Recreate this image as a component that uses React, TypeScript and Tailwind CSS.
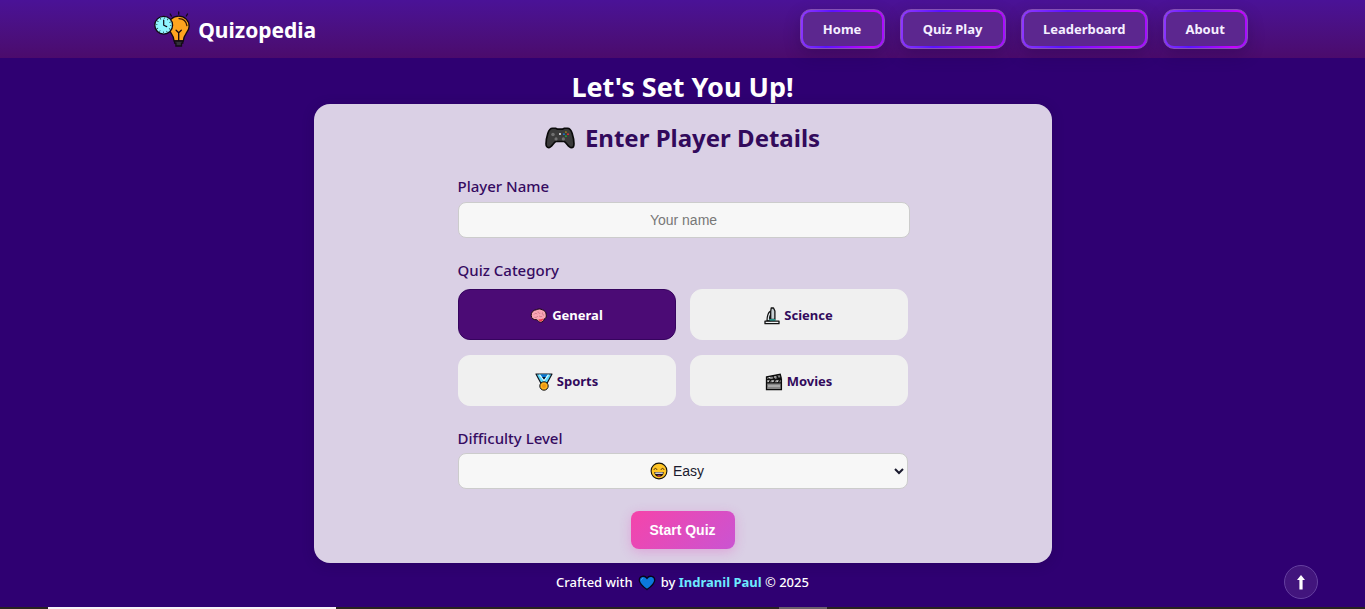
import { useState, type ReactNode } from "react";

type IconProps = { className?: string };

function LogoIcon() {
  return (
    <svg className="h-9 w-9 shrink-0" viewBox="0 0 36 36" fill="none" stroke="#120a14" strokeWidth="1.3" strokeLinecap="round" aria-hidden="true">
      <path d="M24.700 1v2.200M16.200 3l1.200 2M33.500 3l-1.200 2" />
      <path d="M24.700 5.200c-6.200 0-10.400 4.400-10.400 10.200 0 5.700 5.600 7.600 5.800 14.600h9.200c.2-7 5.800-8.900 5.800-14.600 0-5.800-4.200-10.200-10.400-10.200Z" fill="#ffa51f" />
      <path d="M25 7.600c4.200.2 7.300 3 7.900 7" stroke="#3a1b05" />
      <path d="M24.700 29.500v-7.800l-2.600-2.400M24.700 21.700l2.600-2.400" />
      <path d="M20.600 30h8.200v2.200h-1.300V35h-5.600v-2.800h-1.300Z" fill="#33313a" />
      <circle cx="9.700" cy="14.200" r="8.900" fill="#8ff5ff" />
      <circle cx="9.700" cy="14.200" r="7" strokeWidth="1.500" strokeDasharray=".6 3.065" strokeLinecap="butt" />
      <path d="M9.700 9v5.200l3 1.400" strokeWidth="1.200" />
    </svg>
  );
}

function GamepadIcon() {
  return (
    <svg className="h-6 w-[30px] shrink-0" viewBox="0 0 32 24" aria-hidden="true">
      <path d="M8 1.600h3.500l1.800 1h5.400l1.800-1H24c2.500 0 4 2.300 5 5.500 1 3.200 1.900 7.500 1.900 10.900 0 2.800-1.100 4.300-2.900 4.300-2.800 0-5.200-5.500-7.500-6.600h-9C9.200 16.800 6.800 22.300 4 22.300c-1.800 0-2.900-1.500-2.900-4.300 0-3.400.9-7.700 1.900-10.900 1-3.200 2.500-5.500 5-5.500Z" fill="#3b3b3b" stroke="#0a0a0a" strokeWidth="1.800" />
      <circle cx="8.500" cy="8.200" r="1.900" fill="#707070" />
      <circle cx="11.800" cy="13" r="1.700" fill="#707070" />
      <circle cx="19.600" cy="13" r="1.700" fill="#707070" />
      <circle cx="16" cy="7.700" r="1.100" fill="#eee" />
      <circle cx="22.300" cy="5.700" r="1" fill="#a38b15" />
      <circle cx="20.200" cy="7.900" r="1" fill="#1474d4" />
      <circle cx="24.500" cy="7.900" r="1" fill="#e33232" />
      <circle cx="22.300" cy="10" r="1" fill="#20a63c" />
    </svg>
  );
}

function BrainIcon() {
  return (
    <svg className="h-[18px] w-[18px] shrink-0" viewBox="0 0 18 18" fill="none" aria-hidden="true">
      <path d="M1.200 8.500C1 5.400 3.300 3 6.500 2.700c1.700-1 4.200-1 5.800.1 2.300.5 3.900 2.400 3.800 4.700.7 2-.2 4-2.100 4.700-.2 1.700-1.500 2.900-3.300 3-1.600 0-2.600-1.400-3.900-2.500-3 .3-5.400-1-5.600-4.200Z" fill="#f9a5b4" stroke="#19080f" />
      <path d="M8.500 12.200c2 .5 3.600-.2 5-1-.2 2-1.300 3.200-2.900 3.300-1 0-1.700-1-2.100-2.300Z" fill="#ed3e4b" />
      <path d="M4 7.500c1-1.500 2.300-1.300 3.200-.4M8 4.500c0 1.500 1.200 2.100 2.300 1.700M12.500 5.500c-.5 1.500.3 2.500 1.500 2.600M4.500 10.300c1.500.5 2.700-.4 3.500-1.200M9 8.800c1 .9 2 1 3.200.5" stroke="#c97386" strokeWidth=".9" />
    </svg>
  );
}

function MicroscopeIcon() {
  return (
    <svg className="h-[18px] w-[16px] shrink-0" viewBox="0 0 16 18" fill="none" stroke="#111" strokeWidth="1.300" strokeLinejoin="round" aria-hidden="true">
      <path d="M6.500 4C3.500 6 3 9.500 3 14h3.500c-1.200-2.500-.8-5 .2-6.500" fill="#dfe5e8" />
      <path d="M7.200 1h2.300l1.400 3v8.500H6.700V4.500Z" fill="#c8d0d4" />
      <path d="M5.500 12.300h6V14h-6Z" fill="#2fc4b6" stroke="none" />
      <path d="M1 14.200h14v2.500H1Z" fill="#eef1f3" />
    </svg>
  );
}

function MedalIcon() {
  return (
    <svg className="h-[18px] w-[18px] shrink-0" viewBox="0 0 18 18" stroke="#10131c" strokeLinejoin="round" aria-hidden="true">
      <path d="M1 1h16l-4.800 9H5.800Z" fill="#5cd7f8" strokeWidth="1.200" />
      <path d="M5.300 1.600h7.400L9 7.500Z" fill="#0873d1" stroke="none" />
      <path d="m4.500 1.600 4.500 6 4.500-6" stroke="#d9faff" fill="none" strokeWidth="1.100" />
      <path d="m7.200 4 1.800 2.500L10.800 4Z" fill="#10131c" stroke="none" />
      <circle cx="9" cy="13" r="4.200" fill="#ffb319" />
      <circle cx="9" cy="13" r="2" fill="#ef9813" stroke="none" />
    </svg>
  );
}

function ClapperIcon() {
  return (
    <svg className="h-[18px] w-[18px] shrink-0" viewBox="0 0 18 18" aria-hidden="true">
      <path d="m1.500 4 13.700-2.700.9 3.200-4 1.500h4.300v10.700H1.500Z" fill="#858585" stroke="#0b0b0b" strokeWidth="1.300" />
      <path d="M2 6.500h14M3 6.500l2-2.800M7.500 6.500l2-1.400-2-2.300M11.500 5.500l1.500-1.200-1.800-2.200M4 9.700l2-3M8.500 9.700l2-3M13 9.700l2-3M2 9.900h14" stroke="#111" strokeWidth="1.200" fill="none" />
      <path d="m3.500 4.800 1.800-.4M9.200 4.200l1.300-.3M7.200 8.200h1.500M11.700 8.200h1.500M2.700 8.200h1.200" stroke="#f2f2f2" />
      <path d="M3 13h12" stroke="#d6d6d6" strokeWidth=".9" />
    </svg>
  );
}

function SmileIcon({ className = "" }: IconProps) {
  return (
    <svg className={className} viewBox="0 0 18 18" fill="none" aria-hidden="true">
      <circle cx="9" cy="9" r="7.900" fill="#ffc526" stroke="#15120a" strokeWidth="1.100" />
      <path d="M4 7.500c.6-1.600 2.300-1.600 2.900 0M11.100 7.500c.6-1.600 2.300-1.600 2.900 0" stroke="#513007" strokeWidth="1" strokeLinecap="round" />
      <path d="M4.300 10h9.400c0 3-2 4.800-4.700 4.800S4.300 13 4.300 10Z" fill="#18121c" />
      <path d="M5.200 10.500h7.600v1.300H5.200Z" fill="#fff" />
      <path d="M7 14c1-.9 3-.9 4 0-1.200.7-2.800.7-4 0Z" fill="#ef4552" />
    </svg>
  );
}

function HeartIcon() {
  return (
    <svg className="h-4 w-[18px] shrink-0" viewBox="0 0 18 16" aria-hidden="true">
      <path d="M9 14.600C5.500 12 1.300 8.700 1.300 5.200c0-4.300 5.500-5.300 7.700-1.800 2.200-3.500 7.700-2.500 7.700 1.800 0 3.500-4.200 6.800-7.700 9.400Z" fill="#0b78dc" stroke="#07051c" strokeWidth="1.300" />
      <path d="M3.300 5.200c.1-1 .8-1.700 1.800-1.800" stroke="#51a9f3" fill="none" />
    </svg>
  );
}

const links = [
  { label: "Home", width: "w-[85px]" },
  { label: "Quiz Play", width: "w-[106px]" },
  { label: "Leaderboard", width: "w-[127px]" },
  { label: "About", width: "w-[85px]" },
];

const categories: { label: string; icon: ReactNode }[] = [
  { label: "General", icon: <BrainIcon /> },
  { label: "Science", icon: <MicroscopeIcon /> },
  { label: "Sports", icon: <MedalIcon /> },
  { label: "Movies", icon: <ClapperIcon /> },
];

function NavLink({ label, width }: { label: string; width: string }) {
  return (
    <a
      href="#"
      className={`${width} h-10 rounded-[11px] border border-[#8450b5] bg-[linear-gradient(100deg,#9139ff_0%,#5b12ff_35%,#c800ff_85%,#9b12ff_100%)] p-[2px] shadow-[0_6px_16px_rgba(30,0,65,0.3)]`}
    >
      <span className="flex h-full items-center justify-center rounded-lg bg-[#5c278f] pt-[2px] text-[13px] font-bold whitespace-nowrap text-[#f5efff]">
        {label}
      </span>
    </a>
  );
}

export default function App() {
  const [category, setCategory] = useState("General");
  return (
    <div className="flex min-h-screen flex-col bg-[#2f0072] font-['Noto_Sans','Open_Sans',sans-serif] text-white">
      <header className="flex h-[58px] items-center justify-between bg-linear-to-b from-[#4a1297] to-[#4b0b6c] pr-[8.6%] pl-[11.300%]">
        <a href="#" className="flex items-center gap-2">
          <LogoIcon />
          <span className="pt-[3px] text-[21px] font-bold">Quizopedia</span>
        </a>
        <nav className="flex gap-[15px]" aria-label="Main">
          {links.map((link) => (
            <NavLink key={link.label} {...link} />
          ))}
        </nav>
      </header>

      <main className="flex flex-col items-center pt-3">
        <h1 className="h-[34px] text-[27px] leading-[34px] font-bold">Let's Set You Up!</h1>
        <form
          className="flex w-[738px] max-w-full flex-col items-center rounded-2xl bg-[#dad0e5] pb-[14px] text-[#350b61] shadow-[0_2px_12px_rgba(30,0,65,0.3)]"
          onSubmit={(event) => event.preventDefault()}
        >
          <h2 className="flex h-[68px] items-center gap-[10px] text-[24px] font-bold text-[#320a5c]">
            <GamepadIcon />
            Enter Player Details
          </h2>

          <div className="flex w-[450px] max-w-full flex-col">
            <label htmlFor="player" className="h-[30px] pt-[3px] text-[15px] leading-[22px] font-medium">Player Name</label>
            <input
              id="player"
              type="text"
              placeholder="Your name"
              className="h-9 w-[452px] max-w-none rounded-lg border border-[#cccccc] bg-[#f7f7f7] text-center font-['Liberation_Sans',sans-serif] text-[14px] text-[#1a1a2e] placeholder:text-[#777777]"
            />

            <fieldset className="mt-[21px]">
              <legend className="h-[30px] text-[15px] leading-[22px] font-medium">Quiz Category</legend>
              <div className="grid grid-cols-2 gap-x-[14px] gap-y-[15px]">
                {categories.map(({ label, icon }) => (
                  <button
                    key={label}
                    type="button"
                    aria-pressed={category === label}
                    onClick={() => setCategory(label)}
                    className={`flex h-[51px] items-center justify-center gap-1 rounded-xl border pt-[3px] text-[13px] font-bold ${
                      category === label
                        ? "border-[#36045e] bg-[#4b0b75] text-white"
                        : "border-[#f0f0f0] bg-[#f0f0f0] text-[#320a5c]"
                    }`}
                  >
                    {icon}
                    {label}
                  </button>
                ))}
              </div>
            </fieldset>

            <label htmlFor="level" className="mt-[21px] h-[26px] text-[15px] leading-[22px] font-medium">Difficulty Level</label>
            <div className="relative">
              <select
                id="level"
                className="h-9 w-full appearance-none rounded-lg border border-[#cccccc] bg-[#f7f7f7] pl-3 text-center font-['Liberation_Sans',sans-serif] text-[14px] text-[#1a1a2e]"
              >
                <option>Easy</option>
                <option>Medium</option>
                <option>Hard</option>
              </select>
              <SmileIcon className="pointer-events-none absolute top-[9px] left-[42.700%] h-[18px] w-[18px]" />
              <svg className="pointer-events-none absolute top-[15px] right-1 h-[7px] w-[10px]" viewBox="0 0 10 7" fill="none" aria-hidden="true">
                <path d="m1 1 4 4 4-4" stroke="#1a1a2e" strokeWidth="2" />
              </svg>
            </div>
          </div>

          <button
            type="submit"
            className="mt-[22px] h-[38px] w-[104px] rounded-lg bg-[linear-gradient(135deg,#f544aa,#ca54d2)] font-['Liberation_Sans',sans-serif] text-[14px] font-bold text-white shadow-[0_3px_12px_rgba(230,70,190,0.3)]"
          >
            Start Quiz
          </button>
        </form>
      </main>

      <footer className="relative flex flex-1 items-center justify-center pb-1 text-[13px] font-medium">
        <p className="flex items-center gap-[5px] whitespace-nowrap">
          <span>Crafted with</span>
          <HeartIcon />
          <span>
            by <a href="#" className="font-bold text-[#6deaff]">Indranil Paul</a> © 2025
          </span>
        </p>
        <button
          type="button"
          aria-label="Back to top"
          className="absolute right-[47px] bottom-2 flex h-[34px] w-[34px] items-center justify-center rounded-full border border-[#6540a0] bg-[#42157d]"
        >
          <svg className="h-[15px] w-2" viewBox="0 0 8 15" fill="#ffffff" aria-hidden="true">
            <path d="M4 0 8 5H5.600v9.500H2.400V5H0Z" />
          </svg>
        </button>
      </footer>
      <div className="flex h-[2px] bg-[#282320]" aria-hidden="true">
        <div className="ml-[3.500%] w-[21.100%] bg-[#f7f2f7]" />
        <div className="ml-[32.500%] w-[3.500%] bg-[#6a6069]" />
      </div>
    </div>
  );
}
